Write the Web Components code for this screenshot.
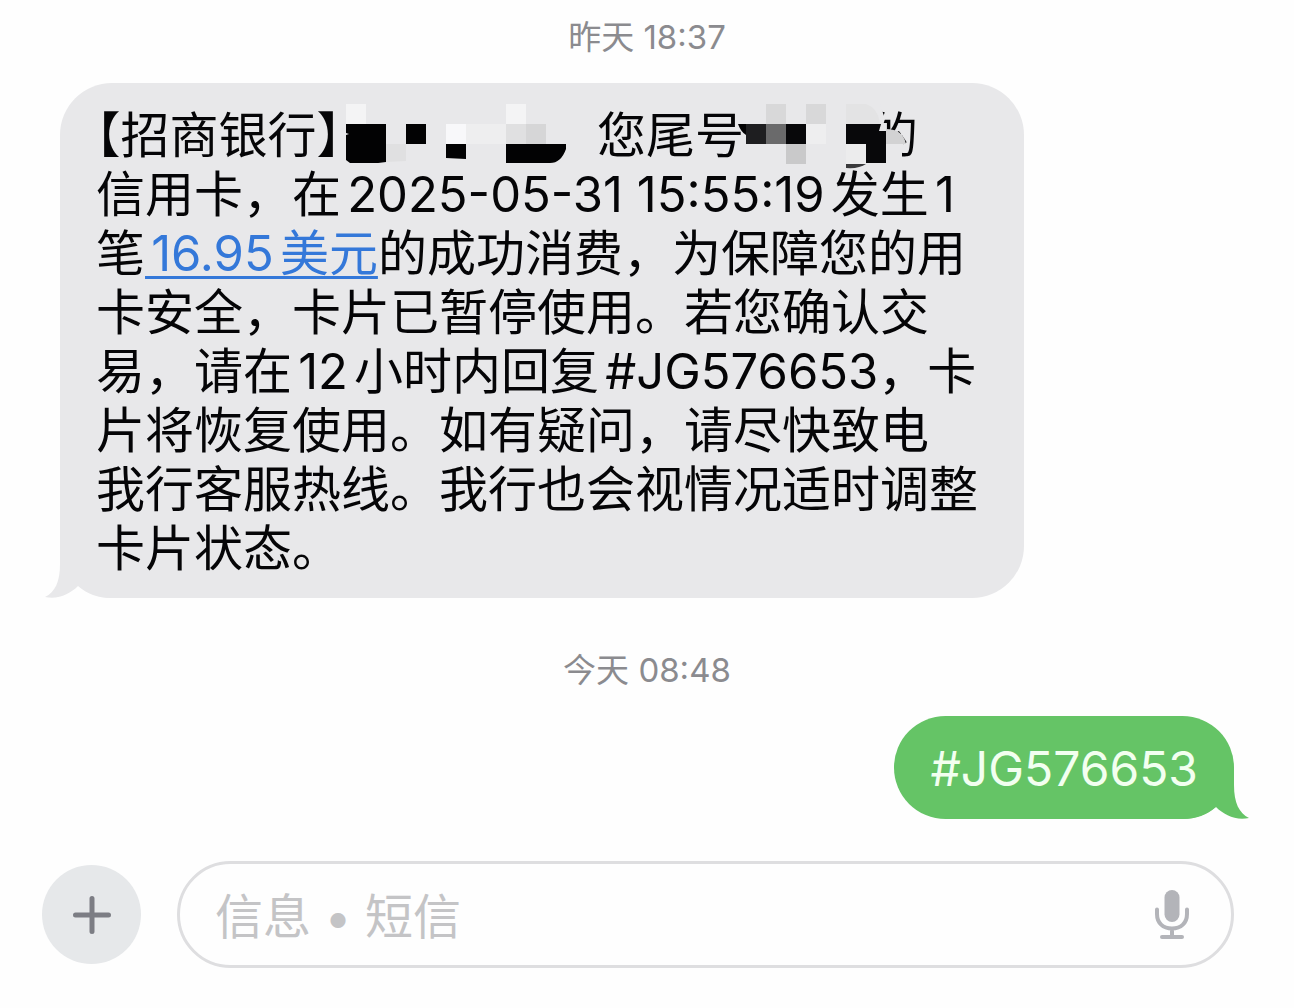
<!DOCTYPE html>
<html lang="zh-CN">
<head>
<meta charset="utf-8">
<meta name="viewport" content="width=device-width, initial-scale=1">
<title>信息</title>
<style>
  html, body { margin: 0; background: #fefefe; }
  body { font-family: Inter, "Noto Sans CJK SC", sans-serif; color: #050507; }
  .half { font-feature-settings: "halt"; }
</style>
</head>
<body>
<chat-thread>
  <time-stamp>昨天 18:37</time-stamp>
  <chat-bubble side="received">【招商银行<span class="half">】</span><redacted-name></redacted-name>您尾号<redacted-card></redacted-card>的<br>信用卡，在2025-05-31 15:55:19发生1<br>笔<money-link>16.95美元</money-link>的成功消费，为保障您的用<br>卡安全，卡片已暂停使用。若您确认交<br>易，请在12小时内回复#JG576653，卡<br>片将恢复使用。如有疑问，请尽快致电<br>我行客服热线。我行也会视情况适时调整<br>卡片状态。</chat-bubble>
  <time-stamp>今天 08:48</time-stamp>
  <chat-bubble side="sent">#JG576653</chat-bubble>
  <message-composer></message-composer>
</chat-thread>
<script>
const define = (name, html) => {
  const template = document.createElement('template');
  template.innerHTML = html.trim();
  customElements.define(name, class extends HTMLElement {
    constructor() {
      super();
      this.attachShadow({ mode: 'open' }).append(template.content.cloneNode(true));
    }
  });
};

define('chat-thread', `
  <style>
    :host { display: block; }
    main { display: flex; flex-direction: column; padding: 14px 60px 40px; }
  </style>
  <main><slot></slot></main>`);

define('time-stamp', `
  <style>
    :host { display: block; text-align: center; font-size: 33px; line-height: 46px; color: #8b8b8f; margin-bottom: 23px; }
  </style>
  <time><slot></slot></time>`);

define('chat-bubble', `
  <style>
    :host { display: block; position: relative; isolation: isolate; box-sizing: border-box; font-size: 49px; line-height: 59px;
            text-spacing-trim: trim-start; text-autospace: normal; }
    :host([side="received"]) { align-self: stretch; margin-right: 210px; padding: 23px 0 20px 36px;
            border-radius: 52px; background: #e8e8ea; margin-bottom: 49px; white-space: nowrap; }
    :host([side="sent"]) { align-self: flex-end; padding: 23px 36px 21px; border-radius: 52px; font-size: 48px;
            background: #65c466; color: #f2fff0; margin-bottom: 42px; }
    svg { position: absolute; z-index: -1; bottom: 0; width: 66px; height: 52px; }
    :host([side="received"]) svg { left: -15px; fill: #e8e8ea; }
    :host([side="sent"]) svg { right: -15px; fill: #65c466; transform: scaleX(-1); }
  </style>
  <svg viewBox="0 0 66 52" aria-hidden="true"><path d="M15 0V18C15 36 10 46 0 51C13 54 25 48 33 40C42 48 53 52 66 52V0Z"/></svg>
  <slot></slot>`);

define('redacted-name', `
  <style>
    :host { display: inline-block; width: 256px; height: 57px; vertical-align: top; margin-top: -2px; }
    svg { display: block; margin-left: 5px; }
  </style>
  <svg width="222" height="59" viewBox="0 0 222 59" aria-hidden="true">
    <path fill="#f4f4f5" d="M0 0h20v20H0zM160 0h20v20h-20z"/>
    <path fill="#f8f8fa" d="M100 20h20v20h-20z"/>
    <path fill="#eeeeef" d="M120 20h40v20h-40z"/>
    <path fill="#e0e0e1" d="M40 40h20v17l-20 1zM160 20h20v20h-20z"/>
    <path fill="#d6d6d7" d="M180 20h20v20h-20z"/>
    <path fill="#020203" d="M0 20h40v38Q20 61 4 59L0 56V31l3-1-3-1zM60 20h20v20H60zM100 40h20v15l-20-1zM160 40h60v5Q215 59 204 59h-44z"/>
  </svg>`);

define('redacted-card', `
  <style>
    :host { display: inline-block; position: relative; width: 125px; height: 57px; vertical-align: top; margin-top: -2px; }
    svg { display: block; overflow: visible; margin-left: -2px; }
  </style>
  <svg width="125" height="62" viewBox="0 0 125 62" aria-hidden="true">
    <path fill="#e8e8ea" d="M104 0h34l5 15-4 12 6 5 15-2v32h-56z"/>
    <path fill="#d8d8d9" d="M24 0h20v20H24zM64 0h20v20H64z"/>
    <path fill="#e3e3e4" d="M104 0h20q12 4 14 20h-34z"/>
    <path fill="#020203" d="M-4 20h8v11q-5-3-8-11z"/>
    <path fill="#1e1e20" d="M4 20h20v20H4z"/>
    <path fill="#6a6a6b" d="M24 20h20v20H24z"/>
    <path fill="#08080a" d="M44 20h20v20H44zM104 20h35l-2 7h7v32h-20V40h-20z"/>
    <path fill="#eeeeef" d="M64 20h20v20H64z"/>
    <path fill="#c9c9ca" d="M44 40h20v20H44z"/>
    <path fill="#ececed" d="M104 40h20v20h-20z"/>
    <path fill="#d2d2d3" d="M144 25q17 0 20 15h-20z"/>
    <path fill="#3a3a3c" d="M104 60h20q-7 5-20 4z"/>
  </svg>`);

define('money-link', `<style>
    a { color: #3478d9; text-decoration: underline; text-decoration-thickness: 3px; text-underline-offset: 5px; }
  </style><a href="#amount"><slot></slot></a>`);

define('message-composer', `
  <style>
    :host { display: block; margin: 0 0 0 -18px; }
    form { display: flex; align-items: center; gap: 36px; }
    button { border: 0; padding: 0; background: none; display: grid; place-items: center; flex: none; }
    .add { width: 99px; height: 99px; border-radius: 50%; background: #e6e8ea; }
    .field { flex: 1; min-width: 0; display: flex; align-items: center; box-sizing: border-box; height: 107px;
             border: 3px solid #dedee0; border-radius: 54px; padding: 0 41px 0 35px; }
    input { flex: 1; min-width: 0; border: 0; outline: 0; padding: 4px 0 0; background: none; font: inherit; font-size: 48px; line-height: 60px; color: #050507; }
    input::placeholder { color: #c4c4c6; opacity: 1; }
    svg { display: block; }
  </style>
  <form>
    <button class="add" type="button" aria-label="添加">
      <svg width="40" height="40" viewBox="0 0 40 40" fill="none" stroke="#7c7d84" stroke-width="5" stroke-linecap="round"><path d="M20 3.5V36.500M3.500 20H36.500"/></svg>
    </button>
    <div class="field">
      <input type="text" aria-label="信息" placeholder="信息 • 短信">
      <button type="button" aria-label="听写">
        <svg width="36" height="50" viewBox="0 0 36 50" fill="none" stroke="#b3b4b9" stroke-linecap="round">
          <rect x="10.500" y="0" width="15" height="32" rx="7.500" fill="#b3b4b9" stroke="none"/>
          <path stroke-width="4" d="M3 19.500V24C3 33 9 38.500 18 38.500S33 33 33 24V19.500M18 39V46M8 47H28"/>
        </svg>
      </button>
    </div>
  </form>`);
</script>
</body>
</html>
